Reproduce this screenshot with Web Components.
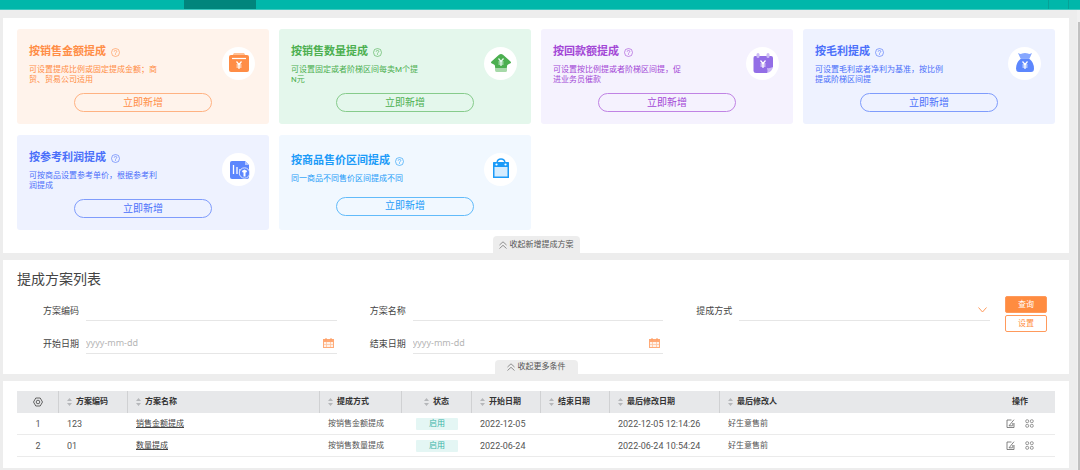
<!DOCTYPE html>
<html lang="zh-CN">
<head>
<meta charset="utf-8">
<title>提成方案</title>
<style>
  body { margin: 0; background: #ededed; color: #444; font: 9px/12px Roboto, "Noto Sans CJK SC", sans-serif; }
</style>
</head>
<body>
<app-shell>
  <app-panel>
    <card-grid>
      <plan-card icon="wallet" heading="按销售金额提成" style="--ink:#ff8d46;--tint:#fff3eb;--line:#ffb282">可设置提成比例或固定提成金额；商贸、贸易公司适用</plan-card>
      <plan-card icon="house" heading="按销售数量提成" style="--ink:#4caf50;--tint:#e4f7ec;--line:#86cb8b">可设置固定或者阶梯区间每卖M个提N元</plan-card>
      <plan-card icon="calendar" heading="按回款额提成" style="--ink:#a347d6;--tint:#f5f2fe;--line:#c083e4;--art:#936ee6">可设置按比例提或者阶梯区间提，促进业务员催款</plan-card>
      <plan-card icon="bag" heading="按毛利提成" style="--ink:#4a6ffa;--tint:#eef2ff;--line:#7f9cfc;--art:#5d87fd">可设置毛利或者净利为基准，按比例提或阶梯区间提</plan-card>
      <plan-card icon="report" heading="按参考利润提成" style="--ink:#4a6ffa;--tint:#eef2ff;--line:#7f9cfc;--art:#5d87fd">可按商品设置参考单价，根据参考利润提成</plan-card>
      <plan-card icon="shopping" heading="按商品售价区间提成" style="--ink:#1c9bf8;--tint:#f1f8ff;--line:#62bbfa">同一商品不同售价区间提成不同</plan-card>
    </card-grid>
    <fold-tab slot="tab" style="--pad:3px 6px 2px">收起新增提成方案</fold-tab>
  </app-panel>
  <app-panel>
    <search-form></search-form>
    <fold-tab slot="tab" style="--pad:1px 12px">收起更多条件</fold-tab>
  </app-panel>
  <app-panel>
    <plan-table></plan-table>
  </app-panel>
</app-shell>

<script>
const define = (name, html) => {
  customElements.define(name, class extends HTMLElement {
    connectedCallback() {
      if (this.shadowRoot) return;
      const tpl = document.createElement('template');
      tpl.innerHTML = typeof html === 'function' ? html(this) : html;
      this.attachShadow({ mode: 'open' }).append(tpl.content.cloneNode(true));
    }
  });
};

const yen = (x, y, c = '#fff') => `<path d="M${x - 2.5} ${y - 3.5}l2.500 3 2.500-3M${x} ${y - .5}v4.500M${x - 2.5} ${y}h5M${x - 2.5} ${y + 2}h5" fill="none" stroke="${c}" stroke-width="1.200"/>`;
const art = {
  wallet: `<path d="M4 4l2-3h10l2 3z" fill="#ffc095"/><rect x="1" y="3" width="20" height="17" rx="2" fill="currentColor"/><path d="M4 6.500h14" stroke="#fff" stroke-width="1.200"/>${yen(11, 13)}`,
  house: `<path d="M5 14h12v4.500q0 1.500-1.500 1.500h-9Q5 20 5 18z" fill="#a6d9a8"/><path d="M11 2q1 0 2 .8l7.500 6.700q1 1 0 1.700l-2.500 1.300q-1 .5-1 1.500v1q0 1-1 1H6q-1 0-1-1v-1q0-1-1-1.500L1.500 11.200q-1-.7 0-1.700L9 2.800Q10 2 11 2z" fill="currentColor"/>${yen(11, 10, '#e4f7ec')}`,
  calendar: `<path d="M3 4h16q2 0 2 2v9l-6 6H4q-2.500 0-2.500-2V6q0-2 1.500-2z" fill="currentColor"/><path d="M21 15q-1 5-6 6 1-2 0-5 3 .5 6-1z" fill="#c9b6f5"/><path d="M6 2.500v2M16 2.500v2" stroke="#cbbaf5" stroke-width="3" stroke-linecap="round"/>${yen(11, 12)}`,
  bag: `<path d="M4 1q3 1.500 4 .5 3-1 6 0 1 1 4-.5l-2.500 5.500h-9z" fill="#86a7ff"/><path d="M7 6.500h8q5 4 5 10 0 3.500-3 3.500H5q-3 0-3-3.500 0-6 5-10z" fill="currentColor"/>${yen(11, 13)}`,
  report: `<path d="M4 3h13l4 4v12q0 2-2 2H4q-2 0-2-2V5q0-2 2-2z" fill="currentColor"/><path d="M17 3l4 4h-4z" fill="#b4c7ff"/><path d="M5.500 7v9M9 9v7M12 11v4" stroke="#fff" stroke-width="1.300"/><circle cx="16.500" cy="15" r="5.200" fill="currentColor" stroke="#dde6ff"/><path d="M13.800 13l2.700-1.500 2.700 1.500-1 1.500h-3.400zM15.500 14h2v4.500h-2z" fill="#fff"/>`,
  shopping: `<path d="M7 4.500Q7.500 1 11 1t4 3.500" fill="none" stroke="currentColor" stroke-width="1.400"/><rect x="3" y="4" width="16" height="16" rx=".6" fill="currentColor"/><rect x="4.500" y="9" width="13" height="9.500" fill="#d5ecfe"/><circle cx="6.500" cy="6.500" r="1.100" fill="#fff"/><circle cx="15.500" cy="6.500" r="1.100" fill="#fff"/>`
};

define('app-shell', `
  <style>
    :host { display: block; }
    nav { display: flex; height: 10px; box-sizing: border-box; background: #00b7aa; border-bottom: 1px solid #3fc9bf; }
    nav .lead { flex: 0 0 17%; }
    nav .on { width: 72px; background: #01857c; }
    nav .rest { flex: 1; }
    nav .tool { width: 20px; border-left: 1px solid #07a196; box-sizing: border-box; }
    nav .end { width: 12px; border-left: 1px solid #07a196; box-sizing: border-box; }
    .body { display: flex; align-items: stretch; }
    main { flex: 1; min-width: 0; padding: 8px 8px 2px 3px; display: flex; flex-direction: column; gap: 7px; }
    .rail { width: 3px; padding: 12px 0 0 1px; box-sizing: border-box; background: #f1f1f1; display: flex; }
    .rail i { flex: 1; background: #c1c1c1; }
  </style>
  <nav><span class="lead"></span><span class="on"></span><span class="rest"></span><span class="tool"></span><span class="end"></span></nav>
  <div class="body"><main><slot></slot></main><div class="rail"><i></i></div></div>`);

define('app-panel', `
  <style>
    :host { display: block; background: #fff; }
    .in { padding: 10px 14px 0; }
    footer { display: flex; justify-content: center; padding-top: 6px; }
  </style>
  <div class="in"><slot></slot></div><footer><slot name="tab"></slot></footer>`);

define('card-grid', `
  <style>:host { display: grid; grid-template-columns: repeat(4, 1fr); gap: 11px 10px; padding-top: 1px; }</style><slot></slot>`);

define('fold-tab', `
  <style>
    :host { display: block; }
    button { display: flex; align-items: center; gap: 3px; border: 0; border-radius: 4px 4px 0 0; background: #ededed; color: #555; font: inherit; font-size: 8px; line-height: 12px; padding: var(--pad); }
  </style>
  <button type="button"><svg width="8" height="8" viewBox="0 0 8 8" fill="none" stroke="#777" stroke-width=".8"><path d="M.5 4L4 .8 7.500 4M.5 7.500L4 4.300l3.500 3.200"/></svg><slot></slot></button>`);

define('plan-card', el => `
  <style>
    :host { display: flex; flex-direction: column; justify-content: center; min-height: 95px; box-sizing: border-box; padding: 3px 14px 0 12px; border-radius: 3px; background: var(--tint); color: var(--ink); }
    .head { display: flex; align-items: center; justify-content: space-between; }
    h3 { display: flex; align-items: center; gap: 5px; margin: 0 0 5px; font-size: 11px; line-height: 16px; font-weight: 700; }
    p { margin: 0; width: 132px; min-height: 14px; font-size: 8px; line-height: 10px; }
    .disc { width: 33px; height: 33px; margin-bottom: 3px; border-radius: 50%; background: #fff; display: grid; place-items: center; color: var(--art, var(--ink)); }
    button { align-self: center; width: 138px; height: 19px; margin: 8px 0 0 2px; padding: 0; border: 1px solid var(--line); border-radius: 10px; background: none; color: inherit; font: inherit; font-size: 10px; line-height: 16px; }
  </style>
  <div class="head">
    <div>
      <h3>${el.getAttribute('heading')}<svg width="9" height="9" viewBox="0 0 9 9" fill="none" stroke="currentColor" stroke-width=".6"><circle cx="4.500" cy="4.500" r="4"/><path d="M3.200 3.700q0-1.300 1.300-1.300t1.300 1.200q0 .7-1.300 1.400v.6M4.500 6.200v.8"/></svg></h3>
      <p><slot></slot></p>
    </div>
    <div class="disc"><svg width="22" height="22" viewBox="0 0 22 22">${art[el.getAttribute('icon')]}</svg></div>
  </div>
  <button type="button">立即新增</button>`);

const calIcon = `<svg width="11" height="10" viewBox="0 0 11 10"><rect x=".5" y="1.500" width="10" height="8" fill="#fff2e9" stroke="#ffab78"/><path d="M0 1h11v3H0z" fill="#ffa874"/><path d="M3 0v2.500M8 0v2.500" stroke="#ff9a5c"/><path d="M1 6.500h9M3.500 4v5M7.500 4v5" stroke="#ffc39f" stroke-width=".8"/></svg>`;
define('form-field', el => {
  const kind = el.getAttribute('kind');
  const control = kind === 'select'
    ? '<select id="c"><option></option></select><svg width="9" height="6" viewBox="0 0 9 6" fill="none" stroke="#ff9a5c"><path d="M.5.500l4 4.500 4-4.500"/></svg>'
    : kind === 'date' ? `<input id="c" type="text" placeholder="yyyy-mm-dd">${calIcon}` : '<input id="c" type="text">';
  return `
  <style>
    :host { display: flex; align-items: center; gap: 7px; min-width: 0; }
    label { flex: none; font-size: 9px; line-height: 12px; color: #444; }
    .box { flex: 1; min-width: 0; height: 20px; box-sizing: border-box; display: flex; align-items: center; border-bottom: 1px solid #e6e6e6; padding: 0 3px 2px 0; }
    input, select { flex: 1; min-width: 0; appearance: none; border: 0; outline: 0; padding: 0; background: none; color: #444; font: 9px/12px "Noto Sans", "Noto Sans CJK SC", sans-serif; }
    input::placeholder { color: #b5b5b5; }
    svg { flex: none; }
  </style>
  <label for="c">${el.getAttribute('label')}</label><div class="box">${control}</div>`;
});

define('search-form', `
  <style>
    :host { display: block; }
    h2 { margin: 0; font-size: 14px; line-height: 18px; font-weight: 400; color: #444; }
    form { display: flex; gap: 15px; margin-top: 8px; padding: 0 8px 0 26px; }
    .fields { flex: 1; display: grid; grid-template-columns: repeat(3, 1fr); gap: 13px 33px; padding-top: 5px; }
    .acts { display: flex; flex-direction: column; gap: 2px; }
    button { width: 42px; height: 17px; padding: 0; border: 1px solid #ff9a5c; border-radius: 2px; background: #fff; color: #ff8c40; font: inherit; font-size: 8px; line-height: 12px; }
    button.main { background: #ff8c40; color: #fff; }
  </style>
  <h2>提成方案列表</h2>
  <form>
    <div class="fields">
      <form-field label="方案编码"></form-field>
      <form-field label="方案名称"></form-field>
      <form-field label="提成方式" kind="select"></form-field>
      <form-field label="开始日期" kind="date"></form-field>
      <form-field label="结束日期" kind="date"></form-field>
    </div>
    <div class="acts"><button type="button" class="main">查询</button><button type="button">设置</button></div>
  </form>`);

const sort = '<svg width="5" height="8" viewBox="0 0 5 8" fill="#b5b7ba"><path d="M2.500 0L5 3H0zM2.500 8L0 5h5z"/></svg>';
const ops = `<div class="ops"><button type="button" aria-label="编辑"><svg width="9" height="9" viewBox="0 0 9 9" fill="none" stroke="#666" stroke-width=".8"><path d="M5.500 1H1v7.500h7V4M3 6.800L8 .7M3 6.800h3.500M6.800 4v2.800"/></svg></button><button type="button" aria-label="更多"><svg width="9" height="9" viewBox="0 0 9 9" fill="none" stroke="#777" stroke-width=".8"><rect x=".8" y=".8" width="2.800" height="2.800" rx="1"/><rect x="5.400" y=".8" width="2.800" height="2.800" rx="1"/><rect x=".8" y="5.400" width="2.800" height="2.800" rx="1"/><rect x="5.400" y="5.400" width="2.800" height="2.800" rx="1"/></svg></button></div>`;
const rows = [
  ['1', '123', '销售金额提成', '按销售金额提成', '2022-12-05', '2022-12-05 12:14:26'],
  ['2', '01', '数量提成', '按销售数量提成', '2022-06-24', '2022-06-24 10:54:24']
];
define('plan-table', `
  <style>
    :host { display: block; padding-bottom: 5px; }
    table { width: 100%; table-layout: fixed; border-collapse: separate; border-spacing: 0; }
    th, td { height: 22px; box-sizing: border-box; padding: 0 0 0 8px; text-align: left; white-space: nowrap; line-height: 12px; }
    th { background: #e7e8ea; color: #333; font-size: 8px; border-right: 1px solid #d0d1d3; }
    th:nth-child(n+9) { border-right: 0; }
    th span { display: flex; align-items: center; gap: 4px; }
    td { color: #555; font-size: 8px; border-bottom: 1px solid #ebebeb; }
    td.n { font-size: 9px; }
    .c { text-align: center; padding: 0; }
    .c span { justify-content: center; }
    a { color: #444; text-decoration: underline; text-underline-offset: 1px; }
    mark { display: block; width: 42px; margin: 0 auto; background: #e4f6f4; color: #38b5a8; line-height: 12px; border-radius: 1px; }
    .ops { display: flex; justify-content: center; gap: 10px; }
    .ops button { display: flex; border: 0; padding: 0; background: none; }
    .w1 { width: 42px } .w2 { width: 69px } .w3 { width: 192px } .w4 { width: 82px } .w5 { width: 70px } .w6 { width: 110px } .w7 { width: 70px }
  </style>
  <table>
    <colgroup><col class="w1"><col class="w2"><col class="w3"><col class="w4"><col class="w5"><col class="w2"><col class="w2"><col class="w6"><col><col class="w7"></colgroup>
    <thead><tr>
      <th class="c"><span><svg width="10" height="10" viewBox="0 0 10 10" fill="none" stroke="#555" stroke-width=".9"><path d="M2.800 1h4.400L9.500 5 7.200 9H2.800L.5 5z"/><circle cx="5" cy="5" r="1.800"/></svg></span></th>
      ${['方案编码', '方案名称', '提成方式', '状态', '开始日期', '结束日期', '最后修改日期', '最后修改人'].map(t => `<th${t === '状态' ? ' class="c"' : ''}><span>${sort}${t}</span></th>`).join('')}
      <th class="c">操作</th>
    </tr></thead>
    <tbody>${rows.map(r => `<tr><td class="c n">${r[0]}</td><td class="n">${r[1]}</td><td><a href="#">${r[2]}</a></td><td>${r[3]}</td><td class="c"><mark>启用</mark></td><td class="n">${r[4]}</td><td></td><td class="n">${r[5]}</td><td>好生意售前</td><td class="c">${ops}</td></tr>`).join('')}</tbody>
  </table>`);
</script>
</body>
</html>
